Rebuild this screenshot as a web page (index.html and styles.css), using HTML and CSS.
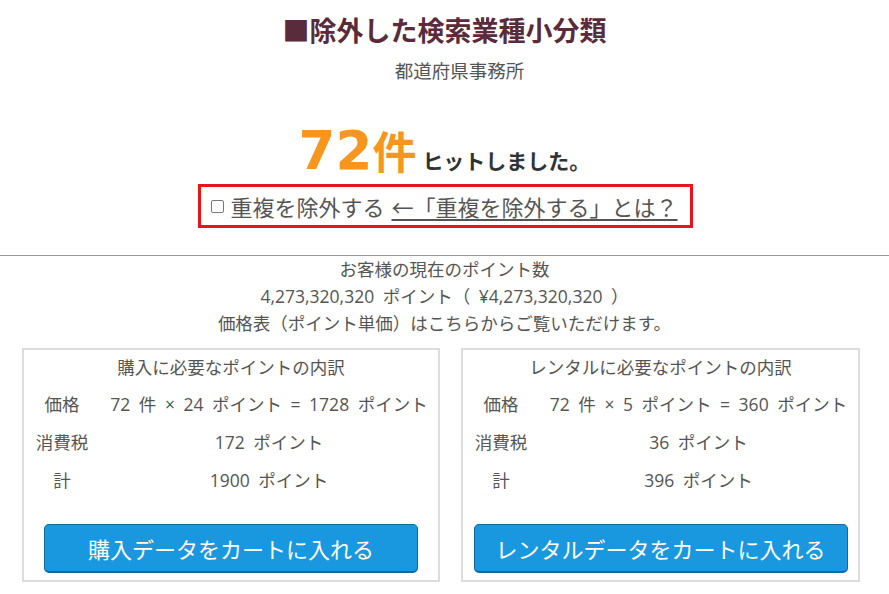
FILE: index.html
```html
<!DOCTYPE html>
<html lang="ja">
<head>
<meta charset="utf-8">
<title>除外した検索業種小分類</title>
<link rel="stylesheet" href="styles.css">
</head>
<body>
<main class="page">
  <h1 class="title">■除外した検索業種小分類</h1>
  <p class="sub">都道府県事務所</p>
  <p class="hits"><span class="count"><span class="num">72</span><span class="unit">件</span></span><span class="hit-text">ヒットしました。</span></p>
  <div class="dedupe-row">
    <div class="dedupe">
      <label class="check"><span class="box-mark"></span>重複を除外する</label>
      <a class="help" href="#">←「重複を除外する」とは？</a>
    </div>
  </div>
  <hr class="rule">
  <section class="points">
    <p>お客様の現在のポイント数</p>
    <p>4,273,320,320 ポイント（ ¥4,273,320,320 ）</p>
    <p>価格表（ポイント単価）はこちらからご覧いただけます。</p>
  </section>
  <div class="boxes">
    <div class="card card-buy">
      <div class="card-head">購入に必要なポイントの内訳</div>
      <div class="grid">
        <div class="lbl">価格</div><div class="val">72 件 × 24 ポイント = 1728 ポイント</div>
        <div class="lbl">消費税</div><div class="val">172 ポイント</div>
        <div class="lbl">計</div><div class="val">1900 ポイント</div>
      </div>
      <div class="btn-row"><button class="btn" type="button">購入データをカートに入れる</button></div>
    </div>
    <div class="card card-rent">
      <div class="card-head">レンタルに必要なポイントの内訳</div>
      <div class="grid">
        <div class="lbl">価格</div><div class="val">72 件 × 5 ポイント = 360 ポイント</div>
        <div class="lbl">消費税</div><div class="val">36 ポイント</div>
        <div class="lbl">計</div><div class="val">396 ポイント</div>
      </div>
      <div class="btn-row"><button class="btn" type="button">レンタルデータをカートに入れる</button></div>
    </div>
  </div>
</main>
</body>
</html>
```
FILE: styles.css
```css
html, body {
  margin: 0;
  padding: 0;
  background: #fff;
}
body {
  font-family: "Open Sans", "Noto Sans CJK JP", sans-serif;
  color: #555;
}
.page {
  width: 889px;
  text-align: center;
}
.title {
  margin: 12px 0 0;
  font-size: 27px;
  line-height: 36px;
  font-weight: bold;
  color: #5a2b3a;
  font-family: "Noto Sans CJK JP", sans-serif;
}
.sub {
  margin: 9px 0 0;
  padding-left: 30px;
  font-size: 18.5px;
  line-height: 28px;
  color: #555;
}
.hits {
  margin: 37px 0 0;
  height: 56px;
  display: flex;
  justify-content: center;
  align-items: baseline;
  gap: 6px;
  padding-left: 0;
}
.count {
  line-height: 56px;
  font-weight: bold;
  color: #f7961f;
}
.num {
  font-family: "DejaVu Sans", sans-serif;
  font-size: 53px;
}
.unit {
  font-family: "Noto Sans CJK JP", sans-serif;
  font-size: 44px;
}
.hit-text {
  font-size: 21px;
  font-weight: bold;
  color: #2f3336;
  font-family: "Noto Sans CJK JP", sans-serif;
}
.dedupe-row {
  margin-top: 6px;
  display: flex;
  justify-content: center;
}
.dedupe {
  border: 3px solid #e8141c;
  padding: 0 12px 0 10px;
  font-size: 22px;
  line-height: 38px;
  color: #555;
  margin-left: 2px;
  display: flex;
  align-items: center;
  gap: 7px;
  font-family: "Noto Sans CJK JP", sans-serif;
}
.check {
  display: flex;
  align-items: center;
  gap: 6px;
}
.box-mark {
  width: 11px;
  height: 11px;
  border: 1px solid #777;
  border-radius: 2px;
}
.help {
  color: #555;
  text-decoration: underline;
  text-underline-offset: 3px;
  text-decoration-thickness: 2px;
}
.rule {
  margin: 27px 0 0;
  border: 0;
  border-top: 1px solid #999;
  height: 0;
}
.points p {
  margin: 0;
  font-size: 17.5px;
  line-height: 27px;
  word-spacing: 4px;
}
.boxes {
  margin-top: 11px;
  display: flex;
  gap: 21px;
  padding-left: 22px;
}
.card {
  border: 2px solid #ddd;
  padding-bottom: 7px;
  font-size: 17.5px;
}
.card-buy { width: 414px; }
.card-rent { width: 395px; }
.card-head {
  line-height: 34px;
}
.grid {
  display: grid;
  grid-template-columns: 76px 1fr;
  grid-auto-rows: 38px;
  align-items: center;
  word-spacing: 4px;
}
.btn-row {
  margin-top: 26px;
  display: flex;
  justify-content: center;
}
.btn {
  width: 374px;
  height: 49px;
  background: #1a98df;
  border: 1px solid #0d6a9f;
  border-bottom-width: 2px;
  border-radius: 5px;
  color: #fff;
  font-size: 22px;
  font-family: "Open Sans", "Noto Sans CJK JP", sans-serif;
  padding: 0;
}
```
